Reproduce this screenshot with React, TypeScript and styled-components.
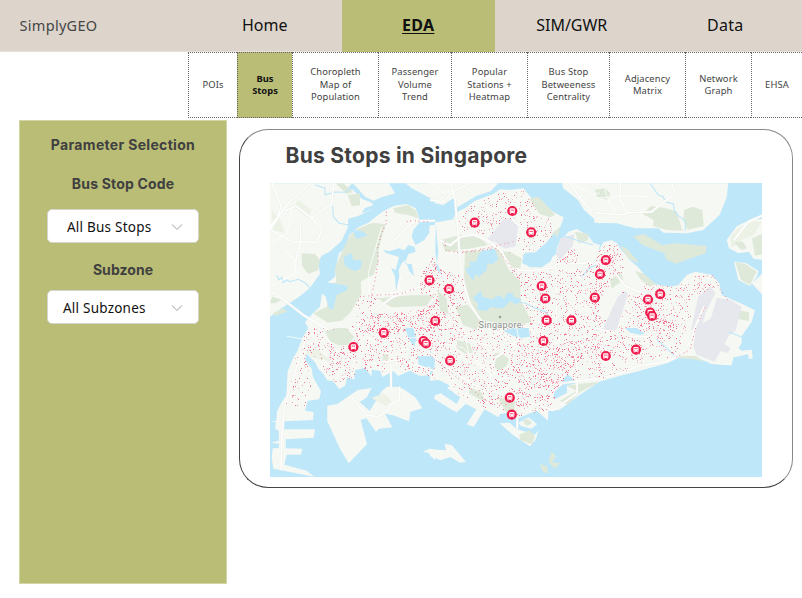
import React from "react";
import styled, { createGlobalStyle } from "styled-components";

const GlobalStyle = createGlobalStyle`
  * { box-sizing: border-box; }
  html, body { margin: 0; background: #fff; overflow: hidden; }
  body { font-family: "Noto Sans", "Open Sans", sans-serif; color: #404040; }
  h1, h2, h3 { margin: 0; font-family: Inter, "Liberation Sans", sans-serif; }
`;

const Page = styled.div`
  width: 802px;
  height: 598px;
  overflow: hidden;
  display: flex;
  flex-direction: column;
`;

const TopBar = styled.header`
  display: flex;
  height: 52px;
  flex: none;
  background: #ddd5cc;
  border-bottom: 1px solid #e6e0da;
`;

const Brand = styled.div`
  width: 188px;
  padding-left: 19.5px;
  line-height: 50px;
  font-size: 14.5px;
  letter-spacing: 0.3px;
  color: #454545;
`;

const NavItem = styled.a<{ $active?: boolean; $spacing: number }>`
  width: 153.5px;
  height: 52px;
  line-height: 50px;
  text-align: center;
  font-size: 16px;
  color: #111;
  letter-spacing: ${(p) => p.$spacing}px;
  background: ${(p) => (p.$active ? "#babd76" : "transparent")};
  font-weight: ${(p) => (p.$active ? 700 : 400)};
  text-decoration: ${(p) => (p.$active ? "underline" : "none")};
  text-decoration-thickness: 1px;
  text-underline-offset: 2px;
`;

const SubTabs = styled.nav`
  display: flex;
  flex: none;
  height: 66px;
  margin-left: 188px;
`;

const SubTab = styled.a<{ $width: number; $active?: boolean }>`
  flex: none;
  width: ${(p) => p.$width}px;
  height: 66px;
  display: flex;
  align-items: center;
  justify-content: center;
  text-align: center;
  white-space: pre-line;
  font-size: 9.4px;
  line-height: 12.4px;
  letter-spacing: ${(p) => (p.$active ? 0 : 0.12)}px;
  color: ${(p) => (p.$active ? "#111" : "#444")};
  font-weight: ${(p) => (p.$active ? 700 : 400)};
  background: ${(p) => (p.$active ? "#babd76" : "#fff")};
  border: 1px dotted #666;
  border-right-width: 0;
`;

const Content = styled.main`
  display: flex;
  padding-left: 19px;
`;

const Sidebar = styled.aside`
  flex: none;
  width: 208px;
  height: 464px;
  margin-top: 2px;
  background: #babd76;
  border: 1px solid #d3d5a5;
  display: flex;
  flex-direction: column;
  align-items: center;
`;

const SideHeading = styled.h3<{ $gap: number; $spacing: number }>`
  margin-top: ${(p) => p.$gap}px;
  height: 20px;
  line-height: 20px;
  font-size: 14px;
  font-weight: 700;
  letter-spacing: ${(p) => p.$spacing}px;
`;

const Select = styled.button<{ $gap: number; $indent: number }>`
  margin-top: ${(p) => p.$gap}px;
  width: 152px;
  height: 34px;
  padding: 1px 14px 0 ${(p) => p.$indent}px;
  display: flex;
  align-items: center;
  justify-content: space-between;
  white-space: nowrap;
  border: 1px solid #d5d5d0;
  border-radius: 5px;
  background: #fff;
  color: #111;
  font: 13.5px "Noto Sans", sans-serif;
  letter-spacing: 0.23px;
`;

const MapCard = styled.section`
  flex: none;
  width: 554px;
  height: 359px;
  margin: 11px 0 0 12px;
  padding: 12px 30px;
  border: 1px solid #444;
  border-top-color: #888;
  border-right-color: #888;
  border-radius: 29px;
`;

const MapTitle = styled.h2`
  height: 28px;
  margin: 0 0 13px 15.5px;
  line-height: 28px;
  font-size: 21px;
  letter-spacing: 0.26px;
  font-weight: 700;
`;

const MapFrame = styled.svg`
  display: block;
  width: 492px;
  height: 294px;
`;

type Point = [number, number];

/** Converts a sheet of coordinates at triple scale to map units. */
const sheet = (ox: number, oy: number, text: string): Point[] =>
  text.split(" ").map((pair) => {
    const [x, y] = pair.split(",").map(Number);
    return [ox + x / 3, oy + y / 3];
  });

const NW = (t: string) => sheet(265, 180, t);
const N = (t: string) => sheet(430, 180, t);
const NE = (t: string) => sheet(595, 180, t);
const SW = (t: string) => sheet(265, 328, t);
const S = (t: string) => sheet(430, 328, t);
const SE = (t: string) => sheet(595, 328, t);
const line = (p: Point[]) => "M" + p.map(([x, y]) => x.toFixed(1) + " " + y.toFixed(1)).join("L");
const area = (p: Point[]) => line(p) + "Z";

const mainland: Point[] = [
  ...NW("120,427 145,398 165,380 170,345 185,310 210,290 215,250 222,220 245,200 252,165 280,142 310,128 350,97 385,78 425,72 452,85 462,105 462,130 445,150 440,170 452,195 478,180 492,160 494,137 480,118 496,118"),
  ...N("0,128 30,125 70,118 76,99 105,84 135,62 190,42 210,28 240,30 280,25 305,55 340,68 370,96 401,112 392,138 372,158 355,190 325,217 284,218 276,247 300,262 335,262 362,244 372,218 390,185 415,155 440,147 475,167 490,188 510,195"),
  ...NE("10,215 25,187 50,180 66,190 72,200 104,240 130,262 154,292 178,312 225,320 250,316 275,285 300,275 350,284 373,310 380,345 435,369 480,391 470,425 440,468"),
  ...SE("440,45 430,60 440,68 470,65 473,92 462,92 458,78 435,85 415,88 410,112 385,111 350,108 315,93 250,90 220,104 130,130 70,145 0,165"),
  ...S("510,160 450,200 388,246 355,249 354,278 320,248 265,270 252,252 210,258 205,268 178,252 120,222 76,199 55,170 25,155 0,153"),
  ...SW("510,158 490,142 465,145 435,128 400,144 385,130 352,147 345,128 320,125 320,146 300,120 270,126 268,155 247,148 240,174 222,183 205,160 187,157 175,138 160,122 150,103 125,77 120,96 140,122 144,147 168,190 163,214 128,218 120,248 146,252 144,276 58,280 58,304 150,304 146,329 62,334 62,361 112,362 108,380 65,380 58,410 125,428 148,446 25,422 20,390 23,361 41,360 43,347 18,344 42,338 41,308 30,302 33,282 15,280 34,278 36,250 50,222 64,202 68,130 83,92 97,70 112,30 130,0"),
];

const malaysia = [
  NW("15,10 510,10 510,64 470,62 410,46 365,60 325,86 280,108 250,116 248,144 230,182 196,214 170,227 160,245 165,282 135,323 105,349 50,384 15,410"),
  N("-5,5 205,10 182,34 140,47 82,82 70,55 40,75 -5,66"),
  N("395,5 510,5 510,132 490,115 462,90 444,60 400,25"),
  NE("-2,10 400,10 395,52 374,104 347,130 325,150 275,160 205,158 190,145 120,145 65,130 -2,128"),
];

const straits = [
  NW("248,25 262,10 275,22 300,50 325,62 350,52 390,40 372,10 420,10 440,25 510,62 510,75 440,80 325,86 290,100 300,84 325,76 320,68 290,56 265,30"),
];

const islands = [
  SW("187,233 217,228 278,186 320,180 305,208 284,222 314,249 350,190 365,176 404,177 425,190 452,209 472,241 436,251 432,280 384,262 360,257 382,298 342,302 333,311 304,271 287,276 306,349 251,406 225,362 187,280"),
  S("15,202 32,196 80,228 91,207 50,179 66,174 163,245 131,297 110,289 139,244 107,228 80,253 60,242 12,212"),
  S("0,364 48,367 44,348 65,351 108,402 90,404 61,387 32,397 0,385"),
  S("209,286 238,284 260,303 315,320 326,307 316,337 300,355 250,322"),
  S("265,285 295,268 321,289 304,302 274,294"),
  S("0,124 24,132 29,155 0,158"),
  SW("473,371 494,362 510,365 510,397 490,374"),
  NE("395,180 425,139 465,119 505,117 505,240 475,236 462,215 430,220 402,205"),
  NE("417,245 452,249 490,272 485,290 465,318 430,300"),
  NE("470,310 505,278 505,347"),
];

const greens = [
  NW("230,217 255,165 280,145 325,128 362,133 350,172 340,210 340,245 325,285 288,304 289,343 257,396 230,422 188,428 145,400 185,380 195,335 214,304 210,265"),
  NW("110,220 150,222 165,240 160,270 130,282 111,258"),
  NW("340,355 435,346 506,346 484,378 380,382 354,367"),
  NW("248,45 285,40 285,76 260,79"),
  NW("385,85 430,75 453,92 460,115 430,105 390,98"),
  NW("55,384 66,395 28,408 25,400"),
  NW("22,350 50,360 30,370 15,370"),
  NW("212,10 234,10 265,36 245,42"),
  N("32,180 90,165 140,165 174,195 84,213 46,214"),
  N("105,215 200,205 223,243 237,270 270,303 272,360 305,425 250,440 155,420 119,368 102,290"),
  N("76,380 113,374 151,420 140,450 100,436"),
  N("298,55 326,50 358,85 376,105 360,112 328,101"),
  N("275,225 325,218 355,183 371,155 392,142 381,174 347,232 308,250"),
  N("435,155 474,161 475,181 446,190"),
  N("22,330 50,355 55,402 30,393"),
  N("205,212 240,216 275,235 271,265 237,262"),
  NE("142,101 168,78 210,84 245,94 262,152 215,150 174,138 176,120"),
  NE("267,90 293,80 322,90 326,139 277,149 265,121"),
  NE("114,169 147,162 201,195 242,190 335,198 332,220 290,234 242,251 213,238 208,220 144,196"),
  NE("76,198 93,203 131,246 120,247 97,232"),
  NE("417,188 442,184 456,205 440,210"),
  NE("421,247 451,252 485,275 465,314 438,300"),
  NE("471,175 505,160 505,222 480,227"),
  NE("432,391 462,397 462,423 425,416"),
  NE("0,30 30,24 46,40 38,59 7,52"),
  NE("120,273 147,281 183,313 165,320 138,300"),
  NE("45,300 78,276 85,300 50,326"),
  SE("262,84 304,84 327,101 295,94 244,90"),
  SW("180,10 215,0 243,0 268,26 248,51 220,52 195,40"),
  SW("353,80 366,78 372,94 354,98"),
  S("80,35 120,47 128,74 105,77 82,62"),
  S("193,75 215,76 237,93 230,113 208,129 188,113"),
  S("120,180 153,191 165,218 145,212 117,196"),
  S("201,207 255,217 252,258 232,257"),
  S("410,173 445,168 510,161 450,192 413,231 390,218 440,189"),
  S("268,320 299,307 315,325 306,349 270,336"),
  S("330,408 351,415 354,437 338,430"),
  S("365,370 378,385 366,403 391,406 374,422 356,402"),
  S("278,278 294,272 307,286 290,294"),
];

const paleGreens = [
  SW("120,72 158,63 201,102 170,96 142,88"),
  SW("320,210 356,195 382,223 360,235"),
  NW("20,90 45,120 60,160 25,150"),
  NW("100,60 140,90 130,115 85,80"),
  NE("405,170 430,143 470,125 500,124 478,165 440,180 410,205"),
];

const urban = [
  N("170,180 219,119 253,111 265,136 257,199 223,206 195,186"),
  N("391,175 434,162 428,199 388,240 378,222"),
  NE("26,440 68,351 90,332 99,344 64,450 30,450"),
  NE("288,450 309,352 346,318 361,340 332,398 317,450"),
  [...NE("348,415 365,353 408,361 440,380 422,452"), ...SE("404,20 388,48 407,60 398,75 377,69 358,101 305,80 295,58 303,0")],
  SE("4,0 35,0 25,10 3,8"),
];

const lakes = [
  NW("235,232 258,218 265,240 290,240 288,264 270,274 240,258"),
  NW("174,307 202,309 248,318 246,331 215,345 204,390 191,384 182,350 158,329"),
  NW("355,209 372,214 402,205 418,211 430,195 448,200 452,215 430,222 420,251 440,252 447,289 433,273 421,240 410,250 401,270 403,290 393,334 390,290 378,263 392,270 402,231 363,219"),
  NW("453,85 510,76 510,134 490,137 480,118 464,123"),
  NW("262,151 290,153 308,166 275,178"),
  N("106,267 122,258 118,244 138,246 145,225 160,208 195,207 205,238 188,252 172,250 170,270 147,290 135,282 130,304 116,284"),
  N("128,355 152,332 158,350 185,358 208,345 222,356 232,340 249,338 250,350 275,357 260,375 240,364 220,385 204,384 181,381 171,393 142,389 145,373"),
  N("280,224 314,219 350,187 374,160 384,176 378,222 360,236 335,260 278,252"),
  N("17,130 25,218 18,264 45,300 35,285 21,250 16,217"),
  S("220,8 246,0 296,0 300,26 268,31 242,20"),
  S("395,162 412,138 442,164 411,173 411,194 374,214 370,195"),
  S("0,65 15,92 12,132 0,141"),
  SW("458,85 502,84 505,110 477,122 461,112"),
  SW("420,0 432,35 448,57 454,30 445,0"),
  SE("90,0 125,0 149,17 134,20 106,14"),
];

const creeks = [
  NW("35,285 42,300 50,292 55,308 65,300 75,305 100,298 120,308 134,322"),
  NW("150,15 179,24 181,44 210,36 240,37 265,22"),
  NW("203,78 205,110 223,130 251,135"),
  NE("165,10 190,45 205,50 210,65 235,72 240,98 272,125 270,152"),
  N("260,365 287,370 310,382 348,396 365,424"),
  N("510,250 480,263 455,290"),
  SE("184,34 210,56 237,82"),
  SE("402,12 442,28"),
  N("405,168 449,184 490,195"),
];

const roads = [
  NW("20,5 48,77 37,117 15,148 82,185 157,187 171,148 140,115 92,78 60,93"),
  NW("0,333 34,342 115,405 190,450"),
  NW("15,140 74,66 105,40 135,10"),
  NW("106,128 107,190 92,240"),
  NW("510,300 455,325 382,352 330,390 300,420 260,450"),
  NW("377,192 412,155 452,122 510,122"),
  NW("138,114 200,70 206,10"),
  N("61,5 75,55 83,150 91,245 100,310 120,370 148,415 180,450"),
  N("30,180 60,196 93,170 130,164 175,182 215,215 236,254 249,269 303,272 368,264 380,252 510,248"),
  N("377,260 380,360 378,450"),
  N("0,60 38,65 70,35 120,10"),
  N("240,110 265,135 305,143"),
  N("420,10 455,60 485,95"),
  N("0,290 90,285"),
  NE("0,250 50,265 90,318 150,342 220,370 242,410 226,440"),
  NE("0,98 80,105 100,98 170,95 240,40 230,10"),
  NE("98,98 75,60 76,10"),
  NE("505,105 460,125 417,180"),
  [...NE("328,379 296,450"), ...SE("298,13 280,50 246,88 211,101 130,115 70,137 0,155")],
  SE("0,55 50,63 100,25 160,26 190,0"),
  SE("0,0 50,13 90,7"),
  SW("128,12 97,110 60,230 50,320 48,425"),
  SW("160,0 220,75 264,80 370,60 440,65 510,50"),
  SW("285,110 405,95 450,110 510,130"),
  SW("261,209 306,262 340,266 370,245 374,230 402,216 405,190 402,176"),
  SW("378,110 378,180"),
  SW("175,95 225,150 245,143"),
  S("0,76 40,111 91,144 136,172 183,187 235,208 300,225 370,246 441,196 441,110 430,75 510,55"),
  S("64,2 115,35 170,51 240,74 340,82 420,78"),
  S("190,0 235,45 285,62 350,62 388,40 390,0"),
  S("159,191 188,160 230,148 290,165 347,198"),
  S("340,80 319,130 338,168 370,190"),
  S("172,192 195,90 235,64 270,28"),
  S("510,151 397,166 335,220 315,235"),
  S("262,265 262,302"),
];

const minor = [
  NW("80,88 66,160 20,190"),
  NW("60,210 90,240 92,280 15,320"),
  NW("350,140 310,280 318,410"),
  NW("408,285 400,335 350,346"),
  N("425,10 490,43 510,38"),
  N("10,12 38,38 68,30"),
  N("80,210 178,209"),
  NE("0,55 90,48 160,50"),
  NE("25,10 36,52 62,98"),
  SW("65,25 125,35 250,128"),
  SW("255,0 330,40 490,25"),
  S("0,35 100,60 155,120 230,148"),
  S("100,0 116,75 180,135 190,188"),
  S("260,0 290,160 260,220"),
  S("420,0 405,80 370,200"),
  SE("0,100 90,70 170,35"),
  SE("15,0 30,130"),
];

const stopZones: Array<[number, Point[]]> = [
  [480, N("80,92 175,50 240,28 280,28 330,70 370,120 365,170 330,215 270,210 255,150 170,160 85,155")],
  [480, [...NW("465,285 495,240 510,220"), ...N("0,220 40,260 95,290 105,370 75,450 -30,450")]],
  [450, NW("260,430 310,400 430,395 510,370 510,450 260,450")],
  [800, [...SW("110,0 510,0 510,155 430,130 370,95 350,145 280,128 235,175 200,155 165,105 125,60")]],
  [130, SW("110,0 160,0 120,95 150,150 125,230 60,250 68,160")],
  [1200, [...N("270,278 370,265 425,275 510,230 510,450"), ...S("500,60 430,110 370,195 330,140 275,130 250,20")]],
  [1100, S("0,0 270,0 270,150 355,130 400,190 350,245 260,265 170,240 70,190 10,90")],
  [340, [...NE("0,245 20,195 65,190 90,260 50,310 0,390")]],
  [520, NE("120,360 150,305 240,320 280,290 350,285 372,330 310,340 275,450 130,450")],
  [750, [...NE("0,390 50,430 80,330 150,360 275,450"), ...SE("265,15 260,60 210,93 100,125 0,155")]],
  [550, S("265,65 510,0 510,145 440,150 370,210 260,240")],
  [70, N("376,222 428,200 445,220 440,250 380,250")],
  [45, NW("260,350 340,345 330,410 270,430")],
  [75, N("205,205 275,225 270,300 230,270")],
];

const inside = ([x, y]: Point, poly: Point[]) => {
  let hit = false;
  for (let i = 0, j = poly.length - 1; i < poly.length; j = i++) {
    const [xi, yi] = poly[i];
    const [xj, yj] = poly[j];
    if (yi > y !== yj > y && x < ((xj - xi) * (y - yi)) / (yj - yi) + xi) hit = !hit;
  }
  return hit;
};

let seed = 20231;
const random = () => {
  seed = (seed * 1664525 + 1013904223) % 4294967296;
  return seed / 4294967296;
};

const blocked = [...greens, ...urban, ...lakes];
const stops: string[] = ["", "", ""];
stopZones.forEach(([count, zone]) => {
  const xs = zone.map((p) => p[0]);
  const ys = zone.map((p) => p[1]);
  const [x0, y0] = [Math.min(...xs), Math.min(...ys)];
  const [w, h] = [Math.max(...xs) - x0, Math.max(...ys) - y0];
  for (let i = 0; i < count; i++) {
    const p: Point = [x0 + random() * w, y0 + random() * h];
    const tone = Math.floor(random() * 3);
    if (random() < 0.82 && inside(p, zone) && inside(p, mainland) && !blocked.some((b) => inside(p, b))) {
      stops[tone] += `M${Math.round(p[0])} ${Math.round(p[1])}h1v1h-1z`;
    }
  }
});

const routes = [
  NW("364,95 364,130 348,165 338,205 340,240 330,300 320,345 316,395"),
  NW("285,350 340,345 405,342 455,325"),
  NW("425,125 440,122 495,125"),
  N("45,185 48,212 95,218 200,205 270,298"),
  N("100,215 170,205 250,185"),
  S("0,80 76,145 170,220 230,230"),
  S("165,20 100,140"),
  SE("302,0 285,65 235,93"),
  NE("300,290 355,287 373,325 400,362"),
  NE("330,382 310,424"),
];

const interchanges: Point[] = [
  [512.3, 211], [474.6, 222.7], [531.2, 232.3], [605.8, 260.2], [600, 274.2], [429.5, 280.3],
  [449, 289], [541.7, 286], [545.3, 298.5], [594.8, 297.6], [660.2, 294.2], [648, 299.5],
  [650.2, 312.5], [652.1, 316], [546.6, 320.4], [571.4, 320.4], [435.2, 321], [383.8, 332.8],
  [353.4, 347], [423.5, 341], [426, 343.5], [543.4, 341], [636, 349.6], [605.8, 356],
  [450.1, 360.6], [509.8, 397.7], [511.8, 414.6],
];

const BusMarker = ({ at: [x, y] }: { at: Point }) => (
  <g transform={`translate(${x} ${y})`}>
    <circle r="5.1" fill="#f01c4d" />
    <rect x="-2.6" y="-2.7" width="5.2" height="4.8" rx="1.2" fill="#fff" />
    <path d="M-1.7-.9h3.4M-1.7 1h.5M1.2 1h.5" stroke="#f01c4d" strokeWidth=".8" />
    <path d="M-1.8 2v.8M1.8 2v.8" stroke="#fff" strokeWidth=".9" />
  </g>
);

const SingaporeMap = () => (
  <MapFrame viewBox="270 183 492 294" role="img" aria-label="Bus stops in Singapore">
    <rect x="270" y="183" width="492" height="294" fill="#bee7f9" />
    <g fill="#f6f8f3">
      {malaysia.map((p, i) => <path key={i} d={area(p)} />)}
    </g>
    <g fill="#bee7f9">
      {straits.map((p, i) => <path key={i} d={area(p)} />)}
    </g>
    <g fill="#f6f8f3">
      {[mainland, ...islands].map((p, i) => <path key={i} d={area(p)} />)}
    </g>
    <g fill="#edf2e7">
      {paleGreens.map((p, i) => <path key={i} d={area(p)} />)}
    </g>
    <g fill="#dfe9d9">
      {greens.map((p, i) => <path key={i} d={area(p)} />)}
    </g>
    <g fill="#e6e8ee">
      {urban.map((p, i) => <path key={i} d={area(p)} />)}
    </g>
    <g fill="#bee7f9">
      {lakes.map((p, i) => <path key={i} d={area(p)} />)}
    </g>
    <g fill="none" stroke="#bee7f9" strokeWidth="1.1">
      {creeks.map((p, i) => <path key={i} d={line(p)} />)}
    </g>
    <g fill="none" strokeLinejoin="round">
      <g stroke="#edf0ea" strokeWidth="2.5">
        {roads.map((p, i) => <path key={i} d={line(p)} />)}
      </g>
      <g stroke="#fff" strokeWidth="1.5">
        {roads.map((p, i) => <path key={i} d={line(p)} />)}
      </g>
      <g stroke="#fff" strokeWidth=".8">
        {minor.map((p, i) => <path key={i} d={line(p)} />)}
      </g>
    </g>
    <g fill="#ee4670">
      <path d={stops[0]} opacity=".75" />
      <path d={stops[1]} opacity=".5" />
      <path d={stops[2]} opacity=".35" />
    </g>
    <g fill="none" stroke="#ee5a7c" strokeWidth="1" strokeDasharray="1 2.4 1 4" opacity=".75">
      {routes.map((p, i) => <path key={i} d={line(p)} />)}
    </g>
    <circle cx="500" cy="317" r="1.3" fill="#9a9e9d" />
    <text x="478.5" y="327.5" textLength="43" fontFamily="Roboto, sans-serif" fontSize="9" fill="#8b8e8d" stroke="#f6f8f3" strokeWidth="1.2" paintOrder="stroke">Singapore</text>
    {interchanges.map((p, i) => <BusMarker key={i} at={p} />)}
  </MapFrame>
);

const Chevron = () => (
  <svg width="14" height="10" viewBox="0 0 14 10" fill="none" stroke="#c5c5c5" strokeWidth="1.1">
    <path d="M2 2.5 7 7.5 12 2.5" />
  </svg>
);

const sections = [
  { label: "Home", spacing: 0 },
  { label: "EDA", spacing: 0.3, active: true },
  { label: "SIM/GWR", spacing: 0 },
  { label: "Data", spacing: 0.3 },
];

const tabs = [
  { label: "POIs", width: 49 },
  { label: "Bus\nStops", width: 55, active: true },
  { label: "Choropleth\nMap of\nPopulation", width: 86 },
  { label: "Passenger\nVolume\nTrend", width: 73 },
  { label: "Popular\nStations +\nHeatmap", width: 76 },
  { label: "Bus Stop\nBetweeness\nCentrality", width: 82 },
  { label: "Adjacency\nMatrix", width: 76 },
  { label: "Network\nGraph", width: 66 },
  { label: "EHSA", width: 51 },
];

export default function App() {
  return (
    <Page>
      <GlobalStyle />
      <TopBar>
        <Brand>SimplyGEO</Brand>
        {sections.map((s) => (
          <NavItem key={s.label} $active={s.active} $spacing={s.spacing}>{s.label}</NavItem>
        ))}
      </TopBar>
      <SubTabs>
        {tabs.map((t) => (
          <SubTab key={t.label} $width={t.width} $active={t.active}>{t.label}</SubTab>
        ))}
      </SubTabs>
      <Content>
        <Sidebar>
          <SideHeading $gap={14} $spacing={0.32}>Parameter Selection</SideHeading>
          <SideHeading $gap={19} $spacing={0.17}>Bus Stop Code</SideHeading>
          <Select $gap={15} $indent={19}>All Bus Stops<Chevron /></Select>
          <SideHeading $gap={17} $spacing={0.05}>Subzone</SideHeading>
          <Select $gap={10} $indent={15}>All Subzones<Chevron /></Select>
        </Sidebar>
        <MapCard>
          <MapTitle>Bus Stops in Singapore</MapTitle>
          <SingaporeMap />
        </MapCard>
      </Content>
    </Page>
  );
}
